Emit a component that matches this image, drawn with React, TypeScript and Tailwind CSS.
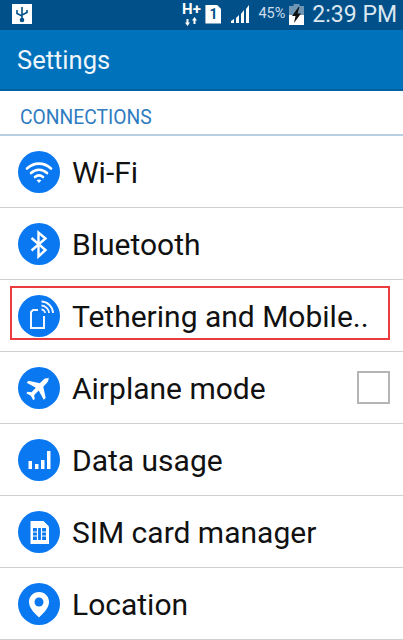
const font = "font-['Roboto',sans-serif]";

const icons = {
  wifi: (
    <svg width="42" height="42" viewBox="0 0 42 42" fill="none" stroke="white" strokeLinecap="round">
      <path d="M9 17.500c7-6.500 17-6.500 24 0" strokeWidth="2.600" />
      <path d="M13 22c4.700-4.300 11.300-4.300 16 0" strokeWidth="2.600" />
      <path d="M17 26c2.400-2 5.600-2 8 0" strokeWidth="2.600" />
      <path d="M18.600 29.200 21 32l2.400-2.800c-1.400-1-3.400-1-4.800 0z" fill="white" stroke="none" />
    </svg>
  ),
  bluetooth: (
    <svg width="42" height="42" viewBox="0 0 42 42" fill="none" stroke="white" strokeWidth="2.400">
      <path d="M13.500 15 27.500 27 20.500 33.500V9.500L27.500 15.500 13.500 27.500" />
    </svg>
  ),
  tethering: (
    <svg width="42" height="42" viewBox="0 0 42 42" fill="none" stroke="white" opacity="0.95">
      <path d="M20 15h-5l-2 2v16h13V21" strokeWidth="2" />
      <path d="M23.500 6.500c6 0 11.500 5.500 11.500 11.500" strokeWidth="1.800" />
      <path d="M23.500 10.500c3.800 0 7.500 3.700 7.500 7.500" strokeWidth="1.800" />
      <path d="M23.500 14.500c1.800 0 3.500 1.700 3.500 3.500" strokeWidth="1.800" />
    </svg>
  ),
  airplane: (
    <svg width="42" height="42" viewBox="0 0 42 42" fill="white">
      <path d="M31 11.500c-1.800-.6-4.200-.2-5.600 1.200l-3.600 3.500-11.300-2.400-1.800 2 9.200 5-4.400 4.500-3.900-.5-1.300 1.400 4.500 2.500 2.500 4.500 1.400-1.300-.5-3.900 4.500-4.400 5 9.200 2-1.800-2.400-11.300 3.500-3.600c1.400-1.400 2.200-4.800 2.200-6.600z" />
    </svg>
  ),
  data: (
    <svg width="42" height="42" viewBox="0 0 42 42" fill="white">
      <rect x="10.500" y="22" width="3.500" height="8" />
      <rect x="17" y="25" width="3.500" height="5" />
      <rect x="23" y="21" width="3.500" height="9" />
      <rect x="29" y="12" width="3.500" height="18" />
    </svg>
  ),
  sim: (
    <svg width="42" height="42" viewBox="0 0 42 42">
      <path d="M12.500 10h13l5.500 5.500V33H12.500z" fill="white" />
      <path d="M15 17h13v12H15z" fill="#0a78f0" />
      <path d="M19.500 17v12M23.500 17v12M15 21h4.500M15 25h4.500M23.500 21H28M23.500 25H28" stroke="white" strokeWidth="1.200" />
    </svg>
  ),
  location: (
    <svg width="42" height="42" viewBox="0 0 42 42">
      <path d="M21 9c-6 0-10 4.500-10 10 0 6.500 6.500 12 10 15.500 3.500-3.500 10-9 10-15.500 0-5.500-4-10-10-10z" fill="white" />
      <circle cx="21" cy="19" r="4.500" fill="#0a78f0" />
    </svg>
  ),
};

const rows = [
  { title: "Wi-Fi", icon: icons.wifi },
  { title: "Bluetooth", icon: icons.bluetooth },
  { title: "Tethering and Mobile..", icon: icons.tethering, outlined: true },
  { title: "Airplane mode", icon: icons.airplane, checkbox: true },
  { title: "Data usage", icon: icons.data },
  { title: "SIM card manager", icon: icons.sim },
  { title: "Location", icon: icons.location },
];

function StatusBar() {
  return (
    <div className="flex h-[30px] items-center bg-[#01508a] pb-[2px] pl-3 pr-[6px] text-[#dbe7f0]">
      {/* usb */}
      <div className="flex h-[20px] w-[20px] items-center justify-center bg-white">
        <svg width="16" height="18" viewBox="0 0 16 18" fill="none" stroke="#01508a" strokeWidth="1.600">
          <path d="M8 2v13M3 5v3.500l5 2.500M13 5v2.500L8 10" />
          <circle cx="8" cy="15" r="1.500" fill="#01508a" />
        </svg>
      </div>
      <div className="ml-auto flex items-center">
        <div className="flex w-[18px] flex-col items-center leading-none">
          <span className="text-[15px] font-bold leading-[13px] text-white">H+</span>
          <svg className="mt-[1px]" width="15" height="9" viewBox="0 0 14 9" fill="white">
            <path d="M3 9 0.500 5.500H2V2h2v3.500h1.500zM10 0l2.500 3.500H11V7H9V3.500H7.500z" />
          </svg>
        </div>
        {/* sim 1 */}
        <div className="ml-[5px] flex h-[19px] w-[16px] items-center justify-center bg-white text-[14px] font-bold leading-none text-[#01508a] [clip-path:polygon(0_0,70%_0,100%_25%,100%_100%,0_100%)]">
          1
        </div>
        <svg className="ml-[9px]" width="21" height="20" viewBox="0 0 21 20" fill="white">
          <path d="M1 17l3-2v4H1zM6 14l3-3v8H6zM11 10l3-4v13h-3zM16 5l3-4v18h-3z" />
        </svg>
        <span className="ml-[7px] text-[14.500px] leading-none text-[#cfdeea]">45%</span>
        {/* battery */}
        <svg className="ml-[4px]" width="15" height="21" viewBox="0 0 15 21">
          <path d="M4.500 0h6v2h-6z" fill="#6f97b5" />
          <path d="M0 2h15v9H0z" fill="#6f97b5" />
          <path d="M0 11h15v10H0z" fill="white" />
          <path d="M9.500 3 3 12h3.500L5 19l7-9.500H8.500L10.500 3z" fill="#111" />
        </svg>
        <span className="ml-[8px] text-[23px] leading-none text-[#dbe7f0]">2:39 PM</span>
      </div>
    </div>
  );
}

export default function App() {
  return (
    <div className={`relative h-[640px] w-[403px] overflow-hidden bg-white ${font}`}>
      <StatusBar />
      <div className="flex h-[61px] items-center border-b-2 border-[#015f9f] bg-[#0072bc] pl-[17px] pt-[2px]">
        <h1 className="text-[25.500px] text-[#eef5fa]">Settings</h1>
      </div>
      <div className="flex h-[45px] items-end border-b-2 border-[#b9cfe2] pb-[5px] pl-[20px]">
        <span className="text-[19.300px] leading-[22px] text-[#2f7cc0]">CONNECTIONS</span>
      </div>
      {rows.map((row) => (
        <div key={row.title} className="relative flex h-[72px] items-center border-b border-[#cfcfcf] pl-[18px] pr-[13px]">
          <div className="flex h-[42px] w-[42px] shrink-0 items-center justify-center rounded-full bg-[#0a78f0]">
            {row.icon}
          </div>
          <span className="ml-[12px] whitespace-nowrap pt-[2px] text-[30px] text-[#111]">{row.title}</span>
          {row.checkbox && <div className="ml-auto h-[33px] w-[33px] border-2 border-[#b5b5b5]" />}
          {row.outlined && (
            <div className="absolute left-[10px] top-[6px] h-[54px] w-[380px] border-[2px] border-[#ea3c3c]" />
          )}
        </div>
      ))}
    </div>
  );
}
